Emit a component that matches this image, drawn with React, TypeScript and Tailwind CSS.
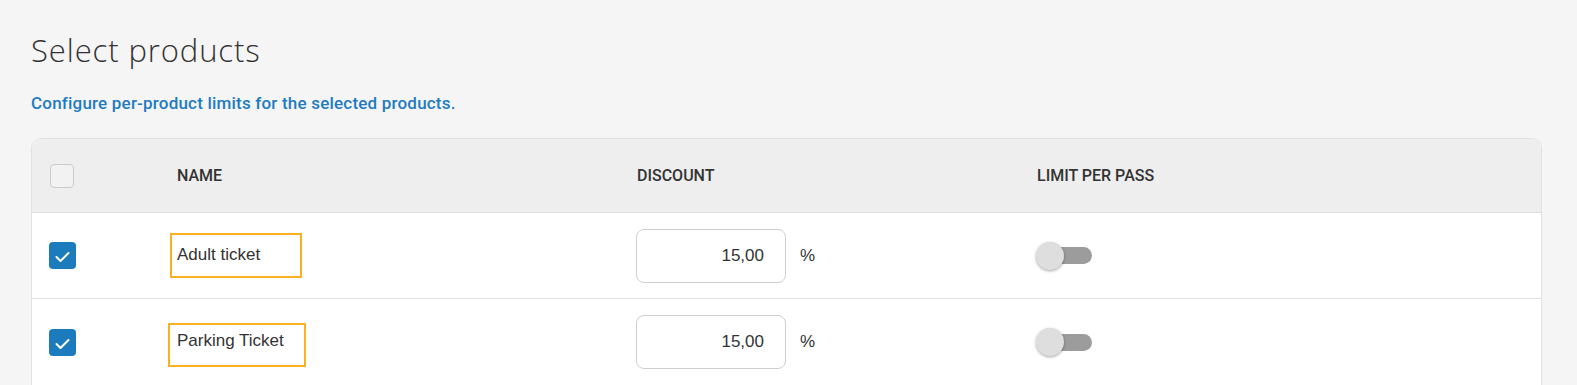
import React from "react";

const CheckedBox = () => (
  <div className="w-[27px] h-[27px] rounded-[4px] bg-[#1b7bbd] flex items-center justify-center">
    <svg width="27" height="27" viewBox="0 0 27 27" fill="none">
      <polyline
        points="7.5,15 11.5,19 19.5,11"
        stroke="white"
        strokeWidth="2"
        strokeLinecap="round"
        strokeLinejoin="round"
      />
    </svg>
  </div>
);

const Toggle = () => (
  <div className="relative w-[56px] h-[28px] -ml-[1px] flex items-center justify-end">
    <div className="w-[46px] h-[17px] rounded-full bg-[#9c9c9c]" />
    <div className="absolute left-0 top-0 w-[28px] h-[28px] rounded-full bg-[#dedede] shadow-[0_1px_3px_rgba(0,0,0,0.35)]" />
  </div>
);

const DiscountInput = () => (
  <div className="flex items-center -ml-[1px]">
    <div className="w-[150px] h-[54px] border border-[#cfcfcf] rounded-[8px] bg-white flex items-center justify-end pr-[21px] text-[17px] text-[#333] font-['Liberation_Sans',Arial,sans-serif]">
      15,00
    </div>
    <span className="ml-[14px] text-[17px] text-[#333] font-['Liberation_Sans',Arial,sans-serif]">%</span>
  </div>
);

export default function App() {
  return (
    <div className="min-h-screen w-full bg-[#f5f5f5] pl-[31px] pr-[35px] pt-[31px]">
      <h1 className="text-[31px] leading-[38px] font-light tracking-[0.9px] text-[#333] font-['Open_Sans',sans-serif]">
        Select products
      </h1>
      <p className="mt-[24px] text-[17px] leading-[20px] font-medium tracking-[0.2px] text-[#1f7bc0] font-['Roboto',sans-serif]">
        Configure per-product limits for the selected products.
      </p>
      <div className="mt-[25px] border border-[#e2e2e2] rounded-t-[10px] overflow-hidden bg-white">
        <div className="grid grid-cols-[145px_460px_400px_1fr] h-[74px] bg-[#eeeeee] border-b border-[#dddddd] items-center font-['Roboto',sans-serif] text-[16px] font-medium text-[#333] uppercase">
          <div className="pl-[18px]">
            <div className="w-[24px] h-[24px] rounded-[4px] border border-[#cccccc] bg-[#f2f2f2]" />
          </div>
          <div>Name</div>
          <div>Discount</div>
          <div>Limit per pass</div>
        </div>

        <div className="grid grid-cols-[145px_460px_400px_1fr] h-[86px] border-b border-[#e0e0e0] items-center">
          <div className="pl-[17px]">
            <CheckedBox />
          </div>
          <div>
            <div className="-ml-[7px] w-[132px] h-[45px] border-2 border-[#f9b122] pl-[5px] pt-[10px] text-[17px] leading-[20px] text-[#333] font-['Liberation_Sans',Arial,sans-serif]">
              Adult ticket
            </div>
          </div>
          <DiscountInput />
          <Toggle />
        </div>

        <div className="grid grid-cols-[145px_460px_400px_1fr] h-[86px] items-center">
          <div className="pl-[17px]">
            <CheckedBox />
          </div>
          <div>
            <div className="-ml-[9px] mt-[6px] w-[138px] h-[44px] border-2 border-[#f9b122] pl-[7px] pt-[6px] text-[17px] leading-[20px] text-[#333] font-['Liberation_Sans',Arial,sans-serif]">
              Parking Ticket
            </div>
          </div>
          <DiscountInput />
          <Toggle />
        </div>
      </div>
    </div>
  );
}
